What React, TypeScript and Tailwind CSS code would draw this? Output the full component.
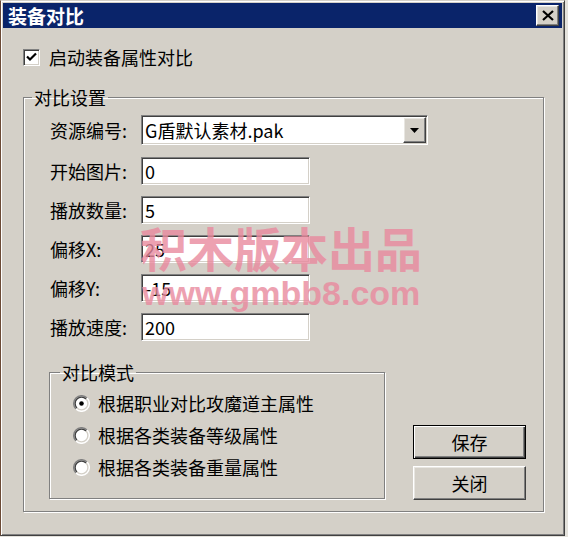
import React from "react";

const sunken =
  "border border-t-[#808080] border-l-[#808080] border-b-white border-r-white shadow-[inset_1px_1px_0_#404040,inset_-1px_-1px_0_#d4d0c8] bg-white";
const raised =
  "border border-t-white border-l-white border-b-[#404040] border-r-[#404040] shadow-[inset_-1px_-1px_0_#808080,inset_1px_1px_0_#e8e6e1] bg-[#d4d0c8]";

function Radio({ checked }: { checked?: boolean }) {
  return (
    <svg width="17" height="17" viewBox="0 0 12 12" className="shrink-0">
      <circle cx="6" cy="6" r="5.5" fill="#fff" />
      <path d="M9.9 2.1 A5.5 5.5 0 0 0 2.1 9.9" stroke="#808080" strokeWidth="1" fill="none" />
      <path d="M2.1 9.9 A5.5 5.5 0 0 0 9.9 2.1" stroke="#ffffff" strokeWidth="1" fill="none" />
      <path d="M9.2 2.8 A4.5 4.5 0 0 0 2.8 9.2" stroke="#404040" strokeWidth="1" fill="none" />
      <path d="M2.8 9.2 A4.5 4.5 0 0 0 9.2 2.8" stroke="#d4d0c8" strokeWidth="1" fill="none" />
      {checked && <circle cx="6" cy="6" r="1.6" fill="#000" />}
    </svg>
  );
}

function Row({ label, value, wide }: { label: string; value: string; wide?: boolean }) {
  return (
    <div className="flex items-center">
      <div className="w-[91px] leading-none">{label}</div>
      {wide ? (
        <div className={`${sunken} w-[287px] h-[30px] flex items-center justify-between`}>
          <span className="pl-[3px] leading-none">{value}</span>
          <div className={`${raised} w-[23px] h-[26px] mr-[1px] flex items-center justify-center`}>
            <svg width="9" height="5" viewBox="0 0 9 5">
              <path d="M0 0 H9 L4.5 5 Z" fill="#000" />
            </svg>
          </div>
        </div>
      ) : (
        <div className={`${sunken} w-[169px] h-[28px] flex items-center`}>
          <span className="pl-[3px] leading-none">{value}</span>
        </div>
      )}
    </div>
  );
}

export default function App() {
  return (
    <div className="w-[568px] h-[537px] bg-[#e4e2dc] relative overflow-hidden font-['Noto_Sans_CJK_SC','Liberation_Sans',sans-serif] text-[18px] text-black">
      <div className="w-[565px] h-[536px] bg-[#d4d0c8] border border-t-[#d4d0c8] border-l-[#6b4a36] border-b-[#404040] border-r-[#404040] shadow-[inset_1px_1px_0_#fff,inset_-1px_-1px_0_#808080] p-[2px] flex flex-col">
        {/* title bar */}
        <div className="h-[25px] bg-[#0a246a] flex items-center justify-between pl-[5px] pr-[3px]">
          <span className="text-white font-bold text-[19px] leading-none">装备对比</span>
          <div className={`${raised} w-[23px] h-[21px] flex items-center justify-center`}>
            <svg width="12" height="11" viewBox="0 0 12 11">
              <path d="M1 1 L11 10 M11 1 L1 10" stroke="#000" strokeWidth="2.2" />
            </svg>
          </div>
        </div>

        {/* content */}
        <div className="pl-[20px] pt-[20px] flex flex-col">
          <div className="flex items-center gap-[9px] h-[18px]">
            <div className={`${sunken} w-[17px] h-[17px] flex items-center justify-center`}>
              <svg width="11" height="10" viewBox="0 0 11 10">
                <path d="M1 4.5 L4 7.5 L10 1.5" stroke="#000" strokeWidth="2.2" fill="none" />
              </svg>
            </div>
            <span className="leading-none">启动装备属性对比</span>
          </div>

          <fieldset className="mt-[21px] w-[521px] border border-[#808080] shadow-[inset_1px_1px_0_#fff,1px_1px_0_#fff] px-0 pb-[12px] pt-[8px]">
            <legend className="ml-[8px] px-[2px] h-[20px] leading-[20px]">对比设置</legend>
            <div className="pl-[26px] flex flex-col">
              <Row label="资源编号:" value="G盾默认素材.pak" wide />
              <div className="mt-[12px] flex flex-col gap-[11px]">
                <Row label="开始图片:" value="0" />
                <Row label="播放数量:" value="5" />
                <Row label="偏移X:" value="25" />
                <Row label="偏移Y:" value="-15" />
                <Row label="播放速度:" value="200" />
              </div>
            </div>

            <div className="pl-[25px] mt-[21px] flex items-end">
              <fieldset className="w-[336px] border border-[#808080] shadow-[inset_1px_1px_0_#fff,1px_1px_0_#fff] pl-[23px] pt-[10px] pb-[20px]">
                <legend className="ml-[-13px] px-[2px] h-[20px] leading-[20px]">对比模式</legend>
                <div className="flex flex-col gap-[10px]">
                  <div className="flex items-center gap-[8px] h-[22px]">
                    <Radio checked />
                    <span className="leading-none">根据职业对比攻魔道主属性</span>
                  </div>
                  <div className="flex items-center gap-[8px] h-[22px]">
                    <Radio />
                    <span className="leading-none">根据各类装备等级属性</span>
                  </div>
                  <div className="flex items-center gap-[8px] h-[22px]">
                    <Radio />
                    <span className="leading-none">根据各类装备重量属性</span>
                  </div>
                </div>
              </fieldset>

              <div className="ml-[28px] flex flex-col gap-[7px] mb-[-1px]">
                <div className="w-[113px] h-[34px] border border-black bg-[#d4d0c8] shadow-[inset_1px_1px_0_#fff,inset_-1px_-1px_0_#404040,inset_-2px_-2px_0_#808080] flex items-center justify-center">
                  保存
                </div>
                <div className={`${raised} w-[113px] h-[34px] flex items-center justify-center`}>关闭</div>
              </div>
            </div>
          </fieldset>
        </div>
      </div>

      {/* watermark overlay */}
      <div className="absolute left-[140px] top-[218px] pointer-events-none opacity-80 text-[#e98a9e]">
        <div className="font-bold text-[47px] leading-[58px]">积木版本出品</div>
        <div className="font-['Liberation_Sans',sans-serif] font-bold text-[34px] leading-[34px] ml-[2px]">www.gmbb8.com</div>
      </div>
    </div>
  );
}
